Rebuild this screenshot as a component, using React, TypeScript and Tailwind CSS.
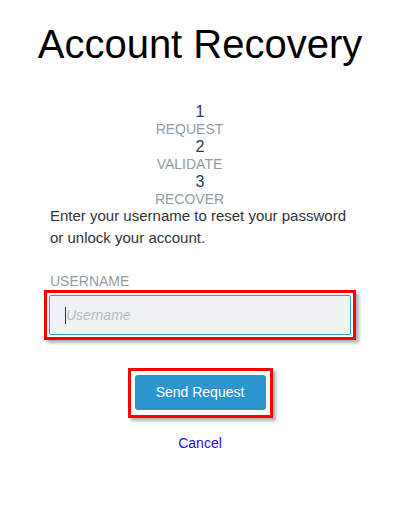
import { useState } from "react";

const steps = [
  { n: 1, label: "REQUEST" },
  { n: 2, label: "VALIDATE" },
  { n: 3, label: "RECOVER" },
];

export default function App() {
  const [username, setUsername] = useState("");

  return (
    <div className="min-h-[508px] w-[400px] bg-white font-['Liberation_Sans',Arial,sans-serif]">
      {/* Title */}
      <h1 className="pt-[21px] text-center text-[40px] leading-[46px] text-black">
        Account Recovery
      </h1>

      <div className="mx-auto flex w-[300px] flex-col">
        {/* Steps */}
        <div className="mt-[36px] flex flex-col">
          {steps.map((s) => (
            <div key={s.n} className="flex flex-col">
              <span className="text-center text-[16px] leading-[18px] text-[#2b3a5c]">
                {s.n}
              </span>
              <span className="pr-[21px] text-center text-[14px] leading-[17px] text-[#8f9ca6]">
                {s.label}
              </span>
            </div>
          ))}
        </div>

        {/* Helper text */}
        <p className="-mt-[3px] text-[15px] leading-[22px] text-[#333]">
          Enter your username to reset your password or unlock your account.
        </p>

        {/* Username */}
        <label className="mt-[24px] text-[14px] leading-[16px] text-[#8f9ca6]">
          USERNAME
        </label>
        <div className="-mx-[6px] mt-[1px] border-[3px] border-[#ff0000] bg-white p-[2px] shadow-[3px_3px_3px_rgba(0,0,0,0.3)]">
          <div className="relative">
            <input
              value={username}
              onChange={(e) => setUsername(e.target.value)}
              placeholder="Username"
              className="h-[40px] w-full rounded-[2px] border border-[#3b98d2] bg-[#eef2f5] px-[16px] text-[14px] text-[#333] outline-none placeholder:italic placeholder:text-[#b5bcc2]"
            />
            {username === "" && (
              <span className="absolute left-[16px] top-[12px] h-[17px] w-px bg-[#333]" />
            )}
          </div>
        </div>

        {/* Actions */}
        <div className="mt-[28px] flex justify-center">
          <div className="border-[3px] border-[#ff0000] bg-white px-[4px] pt-[4px] pb-[5px] shadow-[3px_3px_3px_rgba(0,0,0,0.3)]">
            <button className="h-[35px] w-[131px] rounded-[3px] bg-[#2a95cf] text-[14px] text-white">
              Send Request
            </button>
          </div>
        </div>
        <a
          href="#"
          className="mt-[17px] self-center text-[14px] leading-[17px] text-[#1a0dff]"
        >
          Cancel
        </a>
      </div>
    </div>
  );
}
